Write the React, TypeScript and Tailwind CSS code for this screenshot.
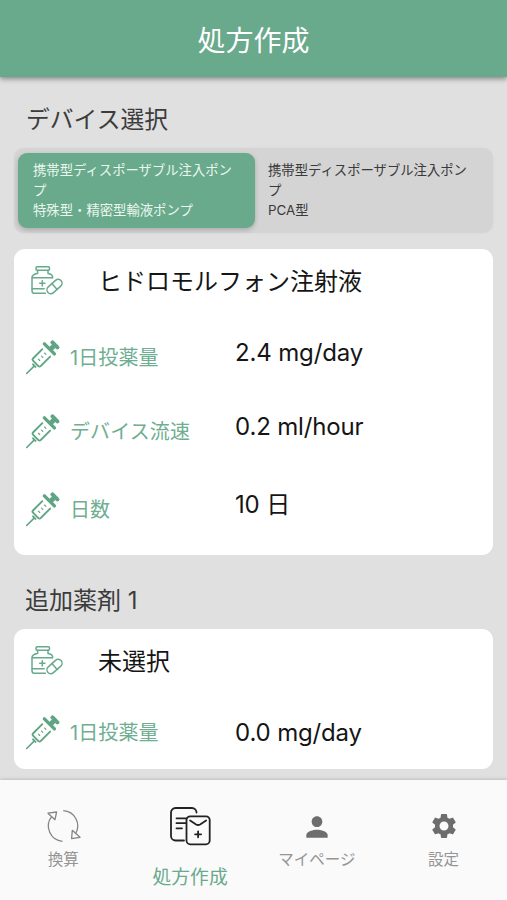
import type { ReactNode } from "react";
import { MdPerson, MdSettings } from "react-icons/md";
import { clsx } from "clsx";

const MedicineIcon = () => (
  <svg
    viewBox="0 0 34 32"
    className="h-8 w-[34px] shrink-0 text-[#69a98c]"
    fill="none"
    stroke="currentColor"
    strokeWidth="1.5"
    strokeLinecap="round"
    strokeLinejoin="round"
    aria-hidden
  >
    <rect x="6" y="1.8" width="13.5" height="3.4" rx="1.2" />
    <path d="M7.6 5.2v3.4c-3 .4-5.600 1.400-5.600 4.200v12.900c0 1.600 1 2.600 2.600 2.600h10.800M18 5.200v3.400c3 .4 4.700 1.600 4.700 4.100" />
    <path d="M2.200 12.800h20.100M2.200 23.800h12M12.300 15.700v5.200M9.700 18.300h5.200" />
    <g transform="rotate(-42 24.500 21.500)">
      <rect x="15.700" y="17.600" width="17.600" height="7.800" rx="3.900" />
      <path d="M24.500 17.600v7.800" />
    </g>
  </svg>
);

const SyringeIcon = () => (
  <svg
    viewBox="0 0 34 36"
    className="h-9 w-[34px] shrink-0 text-[#5fa583]"
    fill="none"
    stroke="currentColor"
    strokeLinecap="round"
    strokeLinejoin="round"
    aria-hidden
  >
    <path d="M.7 34.500 7.600 27.600" strokeWidth="1.600" />
    <path d="M7 25.400 9.500 27.900" strokeWidth="2" />
    <path d="M16.300 10.200 7 19.500c-.7.700-.7 1.500 0 2.200l5.400 5.400c.7.700 1.500.7 2.200 0L24.100 17.600" strokeWidth="1.900" />
    <path d="M18.400 4.900 28.400 14.900" strokeWidth="3.400" />
    <path d="M25.300 9.500 28 6.800" strokeWidth="4.800" />
    <path d="M26.500 3.400 31.400 8.300" strokeWidth="4" />
    <path d="m12.400 20.200 1.300 1.300M15.500 17.100l1.300 1.300M18.600 14l1.300 1.300" strokeWidth="1.100" />
  </svg>
);

const ConvertIcon = () => (
  <svg
    viewBox="0 0 36 36"
    className="size-9 text-[#858585]"
    fill="none"
    stroke="currentColor"
    strokeWidth="1.300"
    strokeLinejoin="round"
    aria-hidden
  >
    <path d="M18.200 2.700a15.300 15.300 0 0 1 12.300 23.200M17.500 33.300A15.300 15.300 0 0 1 6.600 8.700" />
    <path d="M3 5.200 11.600 4 10 11.700ZM27.300 22.300l7.700 7-8.400 1.300Z" />
  </svg>
);

const PrescriptionIcon = () => (
  <svg
    viewBox="0 0 42 40"
    className="h-10 w-[42px] text-[#222]"
    fill="none"
    stroke="currentColor"
    strokeWidth="1.800"
    strokeLinecap="round"
    strokeLinejoin="round"
    aria-hidden
  >
    <path d="M15 34.500H6.500A4.500 4.500 0 0 1 2 30V6.500A4.500 4.500 0 0 1 6.500 2h16.500a4.500 4.500 0 0 1 4.500 4.500" />
    <path d="M7.500 12.300h10M7.500 17.200h9M7.500 22.300h5.500" />
    <rect x="17.500" y="10.300" width="23.200" height="28" rx="3.800" />
    <path d="m21.100 14.400 6 4q2 1.200 4 0l6-4M29.100 25.300v6M26.100 28.300h6" />
  </svg>
);

const DoseRow = ({
  label,
  value,
  className,
  valueClassName,
}: {
  label: string;
  value: string;
  className?: string;
  valueClassName?: string;
}) => (
  <div className={clsx("flex h-9 items-center pl-3", className)}>
    <SyringeIcon />
    <span className="ml-[10px] w-[165px] pt-[2px] text-[20px] tracking-[0.1px] text-[#6fae92]">
      {label}
    </span>
    <span className={clsx("text-[24px] tracking-[-0.15px] text-[#151515]", valueClassName)}>
      {value}
    </span>
  </div>
);

const DrugName = ({ children }: { children: ReactNode }) => (
  <div className="flex h-8 items-center pl-4">
    <MedicineIcon />
    <span className="ml-[34px] pt-[2px] text-[24px] text-[#151515]">{children}</span>
  </div>
);

const NavItem = ({
  icon,
  label,
  active,
}: {
  icon: ReactNode;
  label: string;
  active?: boolean;
}) => (
  <button
    type="button"
    className={clsx(
      "flex flex-1 flex-col items-center",
      active ? "pt-[26px] text-[18.800px] text-[#69a98c]" : "pt-7 text-[15.500px] text-[#959595]",
    )}
  >
    <span className={clsx("flex items-center justify-center", active ? "h-10" : "h-9")}>{icon}</span>
    <span className={active ? "mt-[18px] leading-7" : "mt-1 leading-6"}>{label}</span>
  </button>
);

export default function App() {
  return (
    <div className="flex h-[900px] w-[507px] flex-col overflow-hidden bg-[#e0e0e0] font-['Inter','Noto_Sans_CJK_JP',sans-serif] leading-none">
      <header className="z-10 flex h-[77px] shrink-0 items-center justify-center bg-[#69a98c] pt-1 shadow-[0_2px_5px_rgba(0,0,0,0.4)]">
        <h1 className="text-[28px] text-white">処方作成</h1>
      </header>

      <main className="flex-1 overflow-hidden px-[14px]">
        <h2 className="mt-[27px] pl-3 text-[23.800px] leading-8 text-[#3c3c3c]">デバイス選択</h2>

        {/* Device type switch */}
        <div className="mt-3 flex h-[85px] rounded-[10px] bg-[#d4d4d4] p-1 pt-[5px] text-[13.350px] leading-[20px] shadow-[0_0_2px_#d4d4d4]">
          <button
            type="button"
            className="h-[75px] w-[237px] rounded-[9px] bg-[#69a98c] pb-[2px] pl-[15px] text-left text-[#e9f7ee] shadow-[0_2px_5px_rgba(0,0,0,0.2)]"
          >
            携帯型ディスポーザブル注入ポン
            <br />プ<br />
            特殊型・精密型輸液ポンプ
          </button>
          <button type="button" className="h-[75px] flex-1 pb-[2px] pl-[13px] text-left text-[#3a3a3a]">
            携帯型ディスポーザブル注入ポン
            <br />プ<br />
            PCA型
          </button>
        </div>

        <section className="mt-4 h-[306px] rounded-[11px] bg-white pt-4">
          <DrugName>ヒドロモルフォン注射液</DrugName>
          <DoseRow label="1日投薬量" value="2.4 mg/day" className="mt-[42px]" valueClassName="-mt-2" />
          <DoseRow label="デバイス流速" value="0.2 ml/hour" className="mt-[38px]" valueClassName="-mt-2" />
          <DoseRow label="日数" value="10 日" className="mt-[42px]" valueClassName="-mt-2" />
        </section>

        <h2 className="mt-[30px] pl-[11px] text-[24px] leading-8 text-[#3c3c3c]">追加薬剤 1</h2>

        <section className="mt-3 h-[140px] rounded-[11px] bg-white pt-4">
          <DrugName>未選択</DrugName>
          <DoseRow label="1日投薬量" value="0.0 mg/day" className="mt-[37px]" valueClassName="pt-[2px]" />
        </section>
      </main>

      <nav className="flex h-[120px] shrink-0 bg-[#fafafa] shadow-[0_-1px_3px_rgba(0,0,0,0.15)]">
        <NavItem icon={<ConvertIcon />} label="換算" />
        <NavItem icon={<PrescriptionIcon />} label="処方作成" active />
        <NavItem icon={<MdPerson className="mt-[1px] size-8 text-[#6d6d6d]" />} label="マイページ" />
        <NavItem icon={<MdSettings className="size-[30px] text-[#6d6d6d]" />} label="設定" />
      </nav>
    </div>
  );
}
